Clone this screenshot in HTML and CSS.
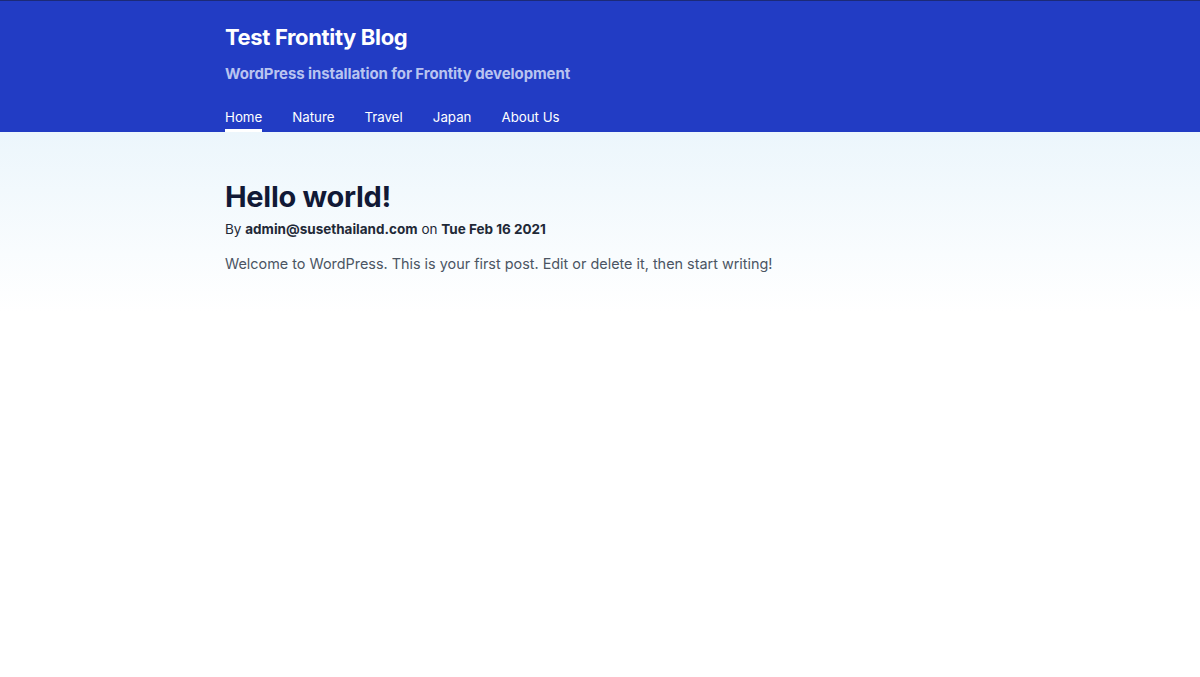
FILE: index.html
```html
<!DOCTYPE html>
<html>
<head>
<meta charset="utf-8">
<link rel="stylesheet" href="styles.css">
</head>
<body>
<header class="header">
  <div class="container">
    <h1 class="site-title">Test Frontity Blog</h1>
    <p class="site-desc">WordPress installation for Frontity development</p>
    <nav class="nav">
      <a class="nav-item active">Home</a>
      <a class="nav-item">Nature</a>
      <a class="nav-item">Travel</a>
      <a class="nav-item">Japan</a>
      <a class="nav-item">About Us</a>
    </nav>
  </div>
</header>
<main class="main">
  <div class="container">
    <h2 class="post-title">Hello world!</h2>
    <p class="meta">By <strong>admin@susethailand.com</strong> on <strong>Tue Feb 16 2021</strong></p>
    <p class="content">Welcome to WordPress. This is your first post. Edit or delete it, then start writing!</p>
  </div>
</main>
</body>
</html>
```
FILE: styles.css
```css
html, body { margin: 0; padding: 0; }
body {
  font-family: Inter, "Noto Sans", sans-serif;
  background: #fff;
  height: 677px;
  overflow: hidden;
}
.container {
  width: 750px;
  margin: 0 auto;
}
.header {
  background: #223cc4;
  border-top: 1px solid #1c2a78;
  height: 131px;
  box-sizing: content-box;
}
.site-title {
  margin: 0;
  padding-top: 23px;
  font-size: 22px;
  line-height: 26px;
  font-weight: 700;
  color: #fff;
  letter-spacing: -0.35px;
}
.site-desc {
  margin: 14px 0 0;
  font-size: 15px;
  line-height: 20px;
  font-weight: 700;
  color: #b9c4f0;
  letter-spacing: -0.1px;
}
.nav {
  display: flex;
  gap: 30px;
  margin-top: 24px;
}
.nav-item {
  color: #fff;
  font-size: 13.3px;
  line-height: 18px;
  padding-bottom: 3px;
  border-bottom: 3px solid transparent;
}
.nav-item.active {
  border-bottom-color: #fff;
}
.main {
  background: linear-gradient(to bottom, #ecf6fc 0px, #ffffff 180px);
  height: 545px;
}
.main .container { padding-top: 48px; }
.post-title {
  margin: 0;
  font-size: 29px;
  line-height: 34px;
  font-weight: 700;
  color: #111936;
  letter-spacing: -0.3px;
}
.meta {
  margin: 6px 0 0;
  font-size: 13.5px;
  line-height: 18px;
  color: #1f2937;
}
.meta strong { font-weight: 700; }
.content {
  margin: 16px 0 0;
  font-size: 14.4px;
  line-height: 20px;
  color: #4b5563;
}
```
